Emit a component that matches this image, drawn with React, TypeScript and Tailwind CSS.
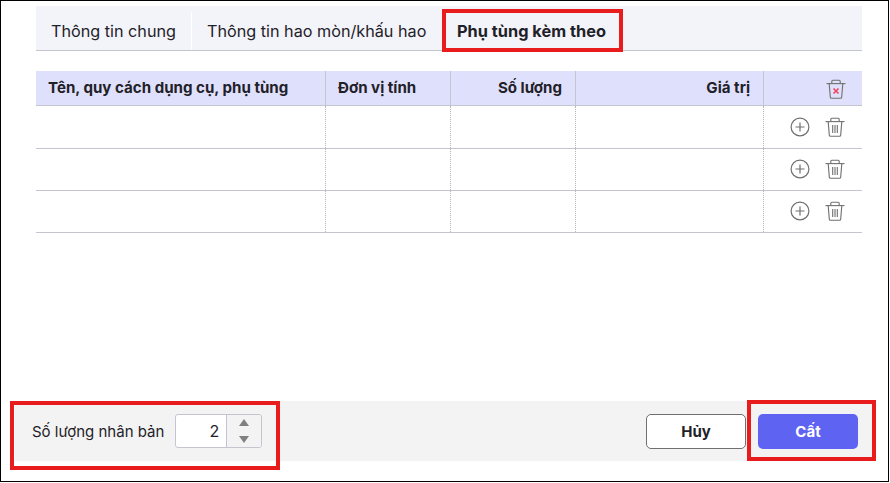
const COLS = ['w-[290px]', 'w-[125px]', 'w-[125px]', 'w-[188px]']

function TrashIcon({ danger }: { danger?: boolean }) {
  return (
    <svg width="20" height="20" viewBox="0 0 20 20" fill="none" stroke="#707070" strokeWidth="1.1">
      <path d="M.5 4.6h19" />
      <path d="M5.8 4.6V2.2q0-1 1-1h6.400q1 0 1 1v2.400" />
      <path d="M3.200 4.600l1.100 13.500q.1 1.100 1.200 1.100h9q1.100 0 1.200-1.100l1.100-13.500" />
      {danger ? (
        <path d="M7.500 9.500l5 5M12.500 9.500l-5 5" stroke="#f0435a" strokeWidth="1.600" />
      ) : (
        <path d="M7.700 8v8M10 8v8M12.300 8v8" />
      )}
    </svg>
  )
}

function PlusIcon() {
  return (
    <svg width="20" height="20" viewBox="0 0 20 20" fill="none" stroke="#707070" strokeWidth="1.2">
      <circle cx="10" cy="10" r="8.900" />
      <path d="M10 5.500v9M5.500 10h9" />
    </svg>
  )
}

function Row({ height }: { height: string }) {
  return (
    <div className={`flex ${height} border-b border-[#c5c5d0]`}>
      {COLS.map((col, i) => (
        <div key={i} className={`${col} border-r border-dotted border-[#b5b5c0]`} />
      ))}
      <div className="flex flex-1 items-center justify-end gap-[15px] pr-[17px] pb-[1px]">
        <PlusIcon />
        <TrashIcon />
      </div>
    </div>
  )
}

export default function App() {
  return (
    <div
      className="relative h-[483px] w-[890px] overflow-hidden bg-white text-[#1f2128]"
      style={{ fontFamily: 'Inter, "Liberation Sans", sans-serif' }}
    >
      <div className="flex h-[482px] w-[889px] flex-col border border-black pt-[5px]">
        <div className="ml-[35px] flex h-[45px] w-[826px] border-b border-[#c5c5d0] bg-[#f3f4f9] text-[16.200px]">
          <div className="flex items-center pt-[6px]">
            <div className="flex h-[38px] w-[156px] items-center border-r border-white pl-[15px]">Thông tin chung</div>
          </div>
          <div className="flex w-[250px] items-center pt-[6px] pl-[15px]">Thông tin hao mòn/khấu hao</div>
          <div className="flex items-center pt-[6px] pl-[15px] text-[16.350px] font-bold">Phụ tùng kèm theo</div>
        </div>

        <div className="mt-[20px] ml-[35px] w-[826px]">
          <div className="flex h-[35px] items-center border-b border-[#c5c5d0] bg-[#dfe0fb] text-[15.100px] font-bold">
            <div className={`${COLS[0]} flex h-full items-center border-r border-[#c5c5d0] pt-[1px] pl-[12px]`}>Tên, quy cách dụng cụ, phụ tùng</div>
            <div className={`${COLS[1]} flex h-full items-center border-r border-[#c5c5d0] pt-[1px] pl-[12px]`}>Đơn vị tính</div>
            <div className={`${COLS[2]} flex h-full items-center justify-end border-r border-[#c5c5d0] pt-[1px] pr-[13px]`}>Số lượng</div>
            <div className={`${COLS[3]} flex h-full items-center justify-end border-r border-[#c5c5d0] pt-[1px] pr-[13px]`}>Giá trị</div>
            <div className="flex flex-1 items-center justify-end pr-[16px] pt-[2px]">
              <TrashIcon danger />
            </div>
          </div>
          <Row height="h-[43px]" />
          <Row height="h-[42px]" />
          <Row height="h-[42px]" />
        </div>

        <div className="mt-auto mb-[20px] ml-[14px] flex h-[60px] w-[861px] items-center bg-[#f3f3f3] pr-[18px] pl-[17px]">
          <span className="pt-[2px] text-[15px]">Số lượng nhân bản</span>
          <div className="ml-[11px] flex h-[34px] w-[87px] rounded-[3px] border border-[#c5c5d0] bg-white">
            <div className="flex flex-1 items-center justify-end pr-[7px] text-base">2</div>
            <div className="flex w-[35px] flex-col items-center justify-center gap-[10px] rounded-r-[3px] border-l border-[#c5c5d0] bg-[#f3f3f3]">
              <div className="h-0 w-0 border-r-[5px] border-b-[7px] border-l-[5px] border-r-transparent border-b-[#808080] border-l-transparent" />
              <div className="h-0 w-0 border-t-[7px] border-r-[5px] border-l-[5px] border-t-[#808080] border-r-transparent border-l-transparent" />
            </div>
          </div>
          <button className="ml-auto h-[35px] w-[100px] rounded-[5px] border border-[#707070] bg-white pt-[2px] text-[15px] font-bold">Hủy</button>
          <button className="ml-[12px] h-[35px] w-[100px] rounded-[5px] bg-[#5f63f2] pt-[2px] text-[15px] font-bold text-white">Cất</button>
        </div>
      </div>

      {/* red highlight frames drawn over the screenshot */}
      <div className="absolute top-[9px] left-[442px] h-[43px] w-[181px] border-4 border-[#e81c1c]" />
      <div className="absolute top-[401px] left-[10px] h-[69px] w-[270px] border-4 border-[#e81c1c]" />
      <div className="absolute top-[400px] left-[747px] h-[61px] w-[129px] border-4 border-[#e81c1c]" />
    </div>
  )
}
